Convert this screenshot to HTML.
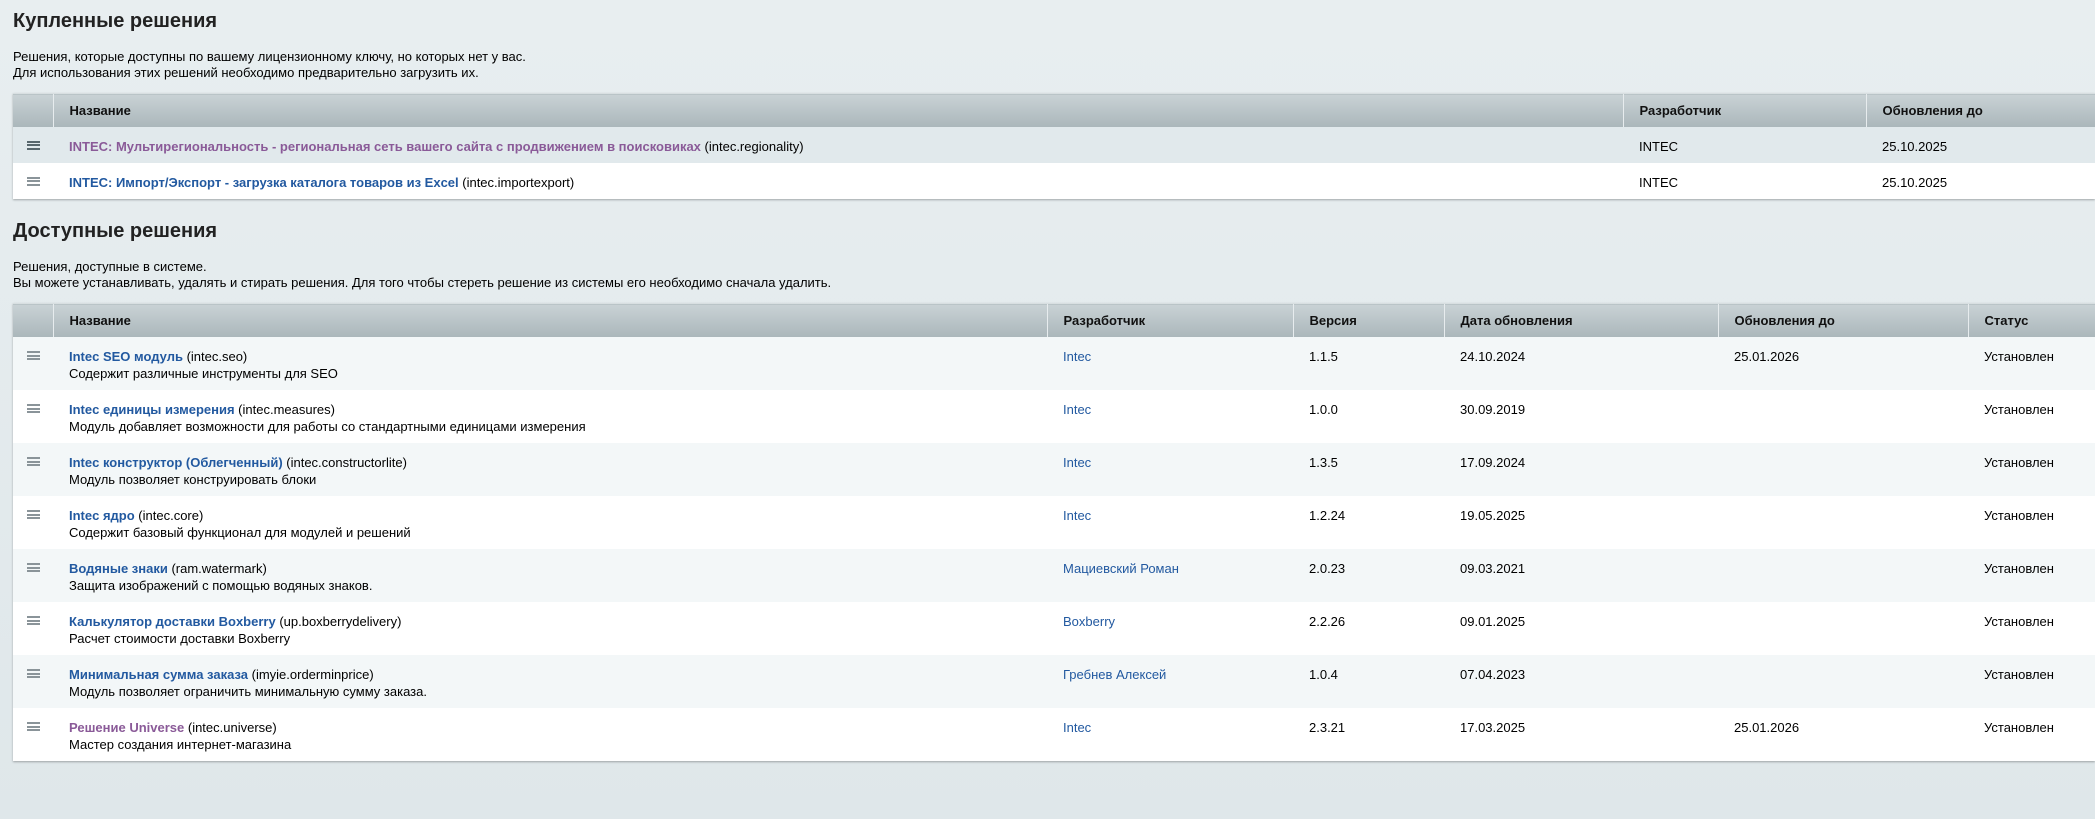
<!DOCTYPE html>
<html><head><meta charset="utf-8"><style>
body{margin:0;width:2095px;height:819px;overflow:hidden;background:linear-gradient(180deg,#e8eef0,#dfe7ea);font-family:"Liberation Sans",Arial,sans-serif;font-size:13px;color:#000;position:relative}
h2{position:absolute;left:13px;margin:0;font-size:20px;font-weight:bold;color:#222}
.d{position:absolute;left:13px;line-height:16px;font-size:13px}
table{position:absolute;left:13px;width:2082px;border-collapse:collapse;table-layout:fixed;box-shadow:0 1px 2px rgba(0,0,0,.3)}
th{height:33px;background:linear-gradient(180deg,#c9d2d5,#aab6ba);text-align:left;font-weight:bold;padding:0 0 0 16px;border-left:1px solid #e7ecee;border-top:1px solid #d8dfe1;font-size:13px;color:#111}
th:first-child{border-left:none;padding:0}
td{vertical-align:top;padding:0 0 0 16px;font-size:13px}
td:first-child{padding:0;text-align:center}
.t1 td{height:36px;box-sizing:border-box;vertical-align:middle;padding-top:2px}
.t1 td:first-child{padding-top:0}
.t2 td{height:53px;padding-top:11px;box-sizing:border-box;line-height:17px}
.t2 td:first-child{padding-top:10px}
tr.g td{background:#f3f7f8}
tr.w td{background:#fff}
tr.h td{background:#e1e9ec}
a{color:#2259a0;font-weight:bold;text-decoration:none}
a.v{color:#8a5a98}
.dv{color:#2259a0}
.m{display:inline-block;width:13px;height:9px;border-top:2px solid #8a9499;border-bottom:2px solid #8a9499;position:relative;box-sizing:border-box}
.m:after{content:"";position:absolute;left:0;right:0;top:1.5px;border-top:2px solid #8a9499}
.h .m,.h .m:after{border-color:#58676d}
</style></head><body>
<h2 style="top:10px">Купленные решения</h2>
<div class="d" style="top:49px">Решения, которые доступны по вашему лицензионному ключу, но которых нет у вас.<br>Для использования этих решений необходимо предварительно загрузить их.</div>
<table class="t1" style="top:93px">
<colgroup><col style="width:40px"><col style="width:1570px"><col style="width:243px"><col></colgroup>
<tr><th></th><th>Название</th><th>Разработчик</th><th>Обновления до</th></tr>
<tr class="h"><td><span class="m"></span></td><td><a class="v">INTEC: Мультирегиональность - региональная сеть вашего сайта с продвижением в поисковиках</a> (intec.regionality)</td><td>INTEC</td><td>25.10.2025</td></tr>
<tr class="w"><td><span class="m"></span></td><td><a>INTEC: Импорт/Экспорт - загрузка каталога товаров из Excel</a> (intec.importexport)</td><td>INTEC</td><td>25.10.2025</td></tr>
</table>
<h2 style="top:220px">Доступные решения</h2>
<div class="d" style="top:259px">Решения, доступные в системе.<br>Вы можете устанавливать, удалять и стирать решения. Для того чтобы стереть решение из системы его необходимо сначала удалить.</div>
<table class="t2" style="top:303px">
<colgroup><col style="width:40px"><col style="width:994px"><col style="width:246px"><col style="width:151px"><col style="width:274px"><col style="width:250px"><col></colgroup>
<tr><th></th><th>Название</th><th>Разработчик</th><th>Версия</th><th>Дата обновления</th><th>Обновления до</th><th>Статус</th></tr>
<tr class="g"><td><span class="m"></span></td><td><a>Intec SEO модуль</a> (intec.seo)<br>Содержит различные инструменты для SEO</td><td class="dv">Intec</td><td>1.1.5</td><td>24.10.2024</td><td>25.01.2026</td><td>Установлен</td></tr>
<tr class="w"><td><span class="m"></span></td><td><a>Intec единицы измерения</a> (intec.measures)<br>Модуль добавляет возможности для работы со стандартными единицами измерения</td><td class="dv">Intec</td><td>1.0.0</td><td>30.09.2019</td><td></td><td>Установлен</td></tr>
<tr class="g"><td><span class="m"></span></td><td><a>Intec конструктор (Облегченный)</a> (intec.constructorlite)<br>Модуль позволяет конструировать блоки</td><td class="dv">Intec</td><td>1.3.5</td><td>17.09.2024</td><td></td><td>Установлен</td></tr>
<tr class="w"><td><span class="m"></span></td><td><a>Intec ядро</a> (intec.core)<br>Содержит базовый функционал для модулей и решений</td><td class="dv">Intec</td><td>1.2.24</td><td>19.05.2025</td><td></td><td>Установлен</td></tr>
<tr class="g"><td><span class="m"></span></td><td><a>Водяные знаки</a> (ram.watermark)<br>Защита изображений с помощью водяных знаков.</td><td class="dv">Мациевский Роман</td><td>2.0.23</td><td>09.03.2021</td><td></td><td>Установлен</td></tr>
<tr class="w"><td><span class="m"></span></td><td><a>Калькулятор доставки Boxberry</a> (up.boxberrydelivery)<br>Расчет стоимости доставки Boxberry</td><td class="dv">Boxberry</td><td>2.2.26</td><td>09.01.2025</td><td></td><td>Установлен</td></tr>
<tr class="g"><td><span class="m"></span></td><td><a>Минимальная сумма заказа</a> (imyie.orderminprice)<br>Модуль позволяет ограничить минимальную сумму заказа.</td><td class="dv">Гребнев Алексей</td><td>1.0.4</td><td>07.04.2023</td><td></td><td>Установлен</td></tr>
<tr class="w"><td><span class="m"></span></td><td><a class="v">Решение Universe</a> (intec.universe)<br>Мастер создания интернет-магазина</td><td class="dv">Intec</td><td>2.3.21</td><td>17.03.2025</td><td>25.01.2026</td><td>Установлен</td></tr>
</table>
</body></html>
